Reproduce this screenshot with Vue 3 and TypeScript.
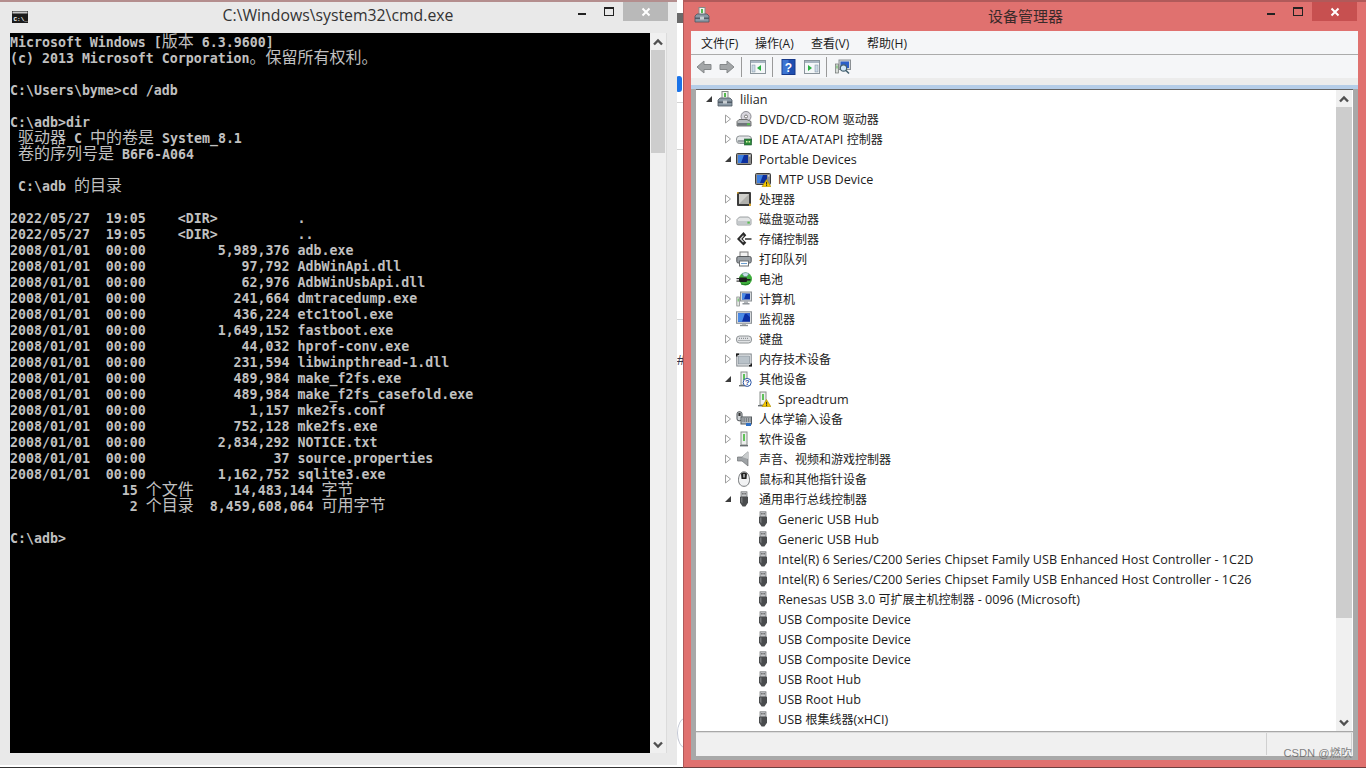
<script setup lang="ts">
interface Segment { text: string; cjk: boolean }
interface TreeRow { level: number; arrow: '' | 'open' | 'closed'; icon: string; label: string }

const consoleText: string[] = [
  'Microsoft Windows [版本 6.3.9600]',
  '(c) 2013 Microsoft Corporation。保留所有权利。',
  '',
  'C:\\Users\\byme>cd /adb',
  '',
  'C:\\adb>dir',
  ' 驱动器 C 中的卷是 System_8.1',
  ' 卷的序列号是 B6F6-A064',
  '',
  ' C:\\adb 的目录',
  '',
  '2022/05/27  19:05    <DIR>          .',
  '2022/05/27  19:05    <DIR>          ..',
  '2008/01/01  00:00         5,989,376 adb.exe',
  '2008/01/01  00:00            97,792 AdbWinApi.dll',
  '2008/01/01  00:00            62,976 AdbWinUsbApi.dll',
  '2008/01/01  00:00           241,664 dmtracedump.exe',
  '2008/01/01  00:00           436,224 etc1tool.exe',
  '2008/01/01  00:00         1,649,152 fastboot.exe',
  '2008/01/01  00:00            44,032 hprof-conv.exe',
  '2008/01/01  00:00           231,594 libwinpthread-1.dll',
  '2008/01/01  00:00           489,984 make_f2fs.exe',
  '2008/01/01  00:00           489,984 make_f2fs_casefold.exe',
  '2008/01/01  00:00             1,157 mke2fs.conf',
  '2008/01/01  00:00           752,128 mke2fs.exe',
  '2008/01/01  00:00         2,834,292 NOTICE.txt',
  '2008/01/01  00:00                37 source.properties',
  '2008/01/01  00:00         1,162,752 sqlite3.exe',
  '              15 个文件     14,483,144 字节',
  '               2 个目录  8,459,608,064 可用字节',
  '',
  'C:\\adb>',
]

function segments(line: string): Segment[] {
  const parts = line.split(/([\u3000-\u9fff]+)/).filter((p) => p.length > 0)
  return parts.map((text) => ({ text, cjk: /[\u3000-\u9fff]/.test(text) }))
}
const consoleLines = consoleText.map(segments)

const usb = (label: string): TreeRow => ({ level: 2, arrow: '', icon: 'usb', label })
const rows: TreeRow[] = [
  { level: 0, arrow: 'open', icon: 'computer', label: 'lilian' },
  { level: 1, arrow: 'closed', icon: 'dvd', label: 'DVD/CD-ROM 驱动器' },
  { level: 1, arrow: 'closed', icon: 'ide', label: 'IDE ATA/ATAPI 控制器' },
  { level: 1, arrow: 'open', icon: 'portable', label: 'Portable Devices' },
  { level: 2, arrow: '', icon: 'mtp', label: 'MTP USB Device' },
  { level: 1, arrow: 'closed', icon: 'cpu', label: '处理器' },
  { level: 1, arrow: 'closed', icon: 'disk', label: '磁盘驱动器' },
  { level: 1, arrow: 'closed', icon: 'storage', label: '存储控制器' },
  { level: 1, arrow: 'closed', icon: 'printer', label: '打印队列' },
  { level: 1, arrow: 'closed', icon: 'battery', label: '电池' },
  { level: 1, arrow: 'closed', icon: 'pc', label: '计算机' },
  { level: 1, arrow: 'closed', icon: 'monitor', label: '监视器' },
  { level: 1, arrow: 'closed', icon: 'keyboard', label: '键盘' },
  { level: 1, arrow: 'closed', icon: 'memory', label: '内存技术设备' },
  { level: 1, arrow: 'open', icon: 'other', label: '其他设备' },
  { level: 2, arrow: '', icon: 'unknown', label: 'Spreadtrum' },
  { level: 1, arrow: 'closed', icon: 'hid', label: '人体学输入设备' },
  { level: 1, arrow: 'closed', icon: 'software', label: '软件设备' },
  { level: 1, arrow: 'closed', icon: 'sound', label: '声音、视频和游戏控制器' },
  { level: 1, arrow: 'closed', icon: 'mouse', label: '鼠标和其他指针设备' },
  { level: 1, arrow: 'open', icon: 'usb', label: '通用串行总线控制器' },
  usb('Generic USB Hub'),
  usb('Generic USB Hub'),
  usb('Intel(R) 6 Series/C200 Series Chipset Family USB Enhanced Host Controller - 1C2D'),
  usb('Intel(R) 6 Series/C200 Series Chipset Family USB Enhanced Host Controller - 1C26'),
  usb('Renesas USB 3.0 可扩展主机控制器 - 0096 (Microsoft)'),
  usb('USB Composite Device'),
  usb('USB Composite Device'),
  usb('USB Composite Device'),
  usb('USB Root Hub'),
  usb('USB Root Hub'),
  usb('USB 根集线器(xHCI)'),
]

const warn = '<path d="M11.5 8.5 16 15.8H7z" fill="#f5c800" stroke="#a88600" stroke-width=".6"/><rect x="11.1" y="10.8" width="1" height="2.8" fill="#222"/><rect x="11.1" y="14.1" width="1" height="1" fill="#222"/>'
const tower = '<rect x="5" y="1" width="6" height="13" fill="#eef0ee" stroke="#8a8f8c"/><rect x="7" y="3" width="2" height="6" fill="#5fc25a"/><rect x="3" y="14" width="10" height="1.4" fill="#6a6f72"/>'
const portable = '<rect x="0.5" y="2.5" width="15" height="11" rx="1" fill="#8b8b8b" stroke="#3d3d3d"/><rect x="2" y="4" width="10" height="8" fill="#0c2f9e"/><path d="M2 4h6l-3 8H2z" fill="#3d7fe0"/><rect x="12.8" y="4" width="1.6" height="1.6" fill="#ddd"/>'
const icons: Record<string, string> = {
  computer: '<rect x="5" y="0.5" width="6" height="8" fill="#f1f3f1" stroke="#858b88"/><rect x="7" y="2" width="2" height="4" fill="#56b84f"/><path d="M1 9 3 7h10l2 2v6H1z" fill="#8a98a4" stroke="#4c5660" stroke-width=".8"/><rect x="1" y="10.6" width="14" height="1.2" fill="#46505a"/><rect x="6" y="9.6" width="4" height="3" fill="#c8ced2"/>',
  dvd: '<circle cx="10" cy="5.5" r="5" fill="#d7d5dc" stroke="#8b8b92"/><circle cx="10" cy="5.5" r="1.5" fill="#fff" stroke="#777"/><path d="M1 10.5 3 8.5h8l4 2v4.5H1z" fill="#b8bcbf" stroke="#555" stroke-width=".8"/><rect x="1.4" y="12" width="13" height="2.7" fill="#6e7478"/><rect x="11" y="12.4" width="3" height="1.8" fill="#54c04a"/>',
  ide: '<rect x="0.5" y="5" width="15" height="7.5" rx="3" fill="#e4e7e8" stroke="#8d9295"/><rect x="1.5" y="9" width="13" height="2.5" rx="1" fill="#9aa0a4"/><rect x="8.5" y="8" width="7" height="6" fill="#2e8a3a" stroke="#15562a" stroke-width=".6"/><rect x="10" y="10" width="1.5" height="1.5" fill="#d9f2a6"/><rect x="12.6" y="10" width="1.5" height="1.5" fill="#d9f2a6"/>',
  portable,
  mtp: portable + warn,
  cpu: '<rect x="1" y="1" width="14" height="14" rx="1" fill="#3c3c3c"/><rect x="3" y="3" width="10" height="10" fill="#b0b0ac"/><path d="M3 3h10L3 13z" fill="#d0d0cc"/><rect x="13" y="12.6" width="2" height="2.4" fill="#d8a530"/><rect x="1" y="1" width="1.6" height="1.6" fill="#d8a530"/>',
  disk: '<path d="M1 8.5 3.5 6h9L15 8.5V13a1 1 0 0 1-1 1H2a1 1 0 0 1-1-1z" fill="#e2e4e5" stroke="#858a8d" stroke-width=".8"/><rect x="1.5" y="10" width="13" height="3.4" fill="#c4c8cb"/><rect x="11.4" y="10.6" width="2.4" height="2" fill="#58bd50"/>',
  storage: '<path d="M7.5 1 1 8l6.500 6.500 2.800-2.800-3.600-3.700 3.600-3.700z" fill="#2a2a2a"/><path d="M7.500 4.600 4.400 8l3.100 3" fill="none" stroke="#d8d8d8" stroke-width="1.200"/><rect x="9" y="7" width="6.500" height="2" fill="#666"/>',
  printer: '<rect x="4" y="1" width="8" height="5" fill="#f2f2f2" stroke="#7c7c7c"/><rect x="0.800" y="5.500" width="14.400" height="6.500" rx="1.500" fill="#9aa0a5" stroke="#55595c"/><rect x="3.500" y="10" width="9" height="5" fill="#fff" stroke="#6b6f72"/><rect x="5" y="12" width="6" height="1" fill="#6b9ecf"/>',
  battery: '<circle cx="9.500" cy="8" r="6.500" fill="#3fae3c"/><path d="M6 2.500a6 4 0 0 1 7 0l-2 3H8z" fill="#c9dfe8" stroke="#5b7f8f" stroke-width=".5"/><path d="M5 13a6 3 0 0 0 9-1" stroke="#1e7a24" fill="none"/><rect x="3" y="6.500" width="8" height="4.500" rx="1" fill="#1d1d1d"/><rect x="0.500" y="7" width="3" height="1.200" fill="#333"/><rect x="0.500" y="9.500" width="3" height="1.200" fill="#333"/><rect x="10.500" y="8" width="4" height="1.600" fill="#222"/>',
  pc: '<rect x="4.500" y="1" width="11" height="9" fill="#d6dadd" stroke="#8b9094"/><rect x="6" y="2.500" width="8" height="6" fill="#0c33a8"/><path d="M6 2.500h4l-2 6H6z" fill="#4b8ae5"/><rect x="8" y="10" width="4" height="2" fill="#b2b6b9"/><rect x="6.500" y="12" width="7" height="1.500" fill="#90959a"/><rect x="0.800" y="6" width="2.800" height="9" fill="#e6e8e6" stroke="#7d8380" stroke-width=".7"/><rect x="1.700" y="7.500" width="1" height="3" fill="#5bbd54"/>',
  monitor: '<rect x="0.500" y="0.800" width="15" height="11.500" fill="#d9dcdf" stroke="#8c9195"/><rect x="2" y="2.300" width="12" height="8.500" fill="#0b2fa4"/><path d="M2 2.300h7l-3 8.500H2z" fill="#4a8ae6"/><path d="M10 2.300h4v4z" fill="#2c5fd0"/><rect x="6" y="12.300" width="4" height="1.500" fill="#a8acb0"/><rect x="4" y="13.800" width="8" height="1.400" fill="#8b9094"/>',
  keyboard: '<rect x="0.500" y="5" width="15" height="7" rx="3" fill="#e0e2e4" stroke="#8f9496"/><path d="M3 7.300h10M2.500 9.500h11" stroke="#777c80" stroke-width="1" stroke-dasharray="1 1"/>',
  memory: '<rect x="0.800" y="3" width="14.400" height="12" fill="#eef0f2" stroke="#7e8488"/><rect x="2.400" y="5" width="11.200" height="8" fill="#b9c2c9" stroke="#7f8a92" stroke-width=".6"/><path d="M0 2.600h3v1.500H1.500v1.500H0zM16 15.500h-3V14h1.500v-1.500H16z" fill="#1c1c1c"/>',
  other: tower + '<circle cx="11.200" cy="11.400" r="4" fill="#fff" stroke="#2b55a5"/><text x="11.200" y="14.200" font-size="7.500" font-weight="700" text-anchor="middle" fill="#1a3f94" font-family="Liberation Sans, sans-serif">?</text>',
  unknown: tower + warn,
  hid: '<rect x="1" y="0.800" width="5" height="9" rx="2" fill="#cfd3d6" stroke="#4d5256"/><rect x="2.400" y="2" width="2.200" height="3" fill="#333"/><rect x="5" y="6" width="10.500" height="7" fill="#b9bec2" stroke="#555a5e"/><path d="M6.500 8h8M6.500 10h8" stroke="#2c3236" stroke-dasharray="1 .8"/><rect x="10" y="12" width="5" height="3" fill="#2e6fc4"/>',
  software: '<rect x="5" y="1" width="6" height="13" fill="#eceeec" stroke="#878c89"/><rect x="7" y="3" width="2" height="7" fill="#61c25a"/><rect x="4" y="14" width="8" height="1.400" fill="#6a6f72"/>',
  sound: '<path d="M1.500 6H6l6-5.200V15L6 10H1.500z" fill="#9ea2a5" stroke="#6d7174" stroke-width=".7"/><path d="M6 6l6-5.200V8z" fill="#c9cccd"/>',
  mouse: '<path d="M8 .8c3.500 0 5.200 3.500 5.500 7.500.2 3.500-1.500 7-5.500 7s-5.700-3.500-5.500-7C2.800 4.300 4.500.8 8 .8z" fill="#f1f2f3" stroke="#55595c" stroke-width=".8"/><path d="M5 2.500c1.600-1.300 4.400-1.300 6 0l-.5 5.500h-5z" fill="#222"/><rect x="7.200" y="3" width="1.600" height="3.500" fill="#b5b8ba"/>',
  usb: '<rect x="5" y="0.800" width="6" height="5" fill="#c4c6c8" stroke="#6c6e70" stroke-width=".7"/><rect x="6.300" y="2" width="1.200" height="1.500" fill="#555"/><rect x="8.500" y="2" width="1.200" height="1.500" fill="#555"/><path d="M4 5.800h8v6l-2.600 3.800H6.600L4 11.800z" fill="#4a4c4e"/><path d="M5 6.500h1.500v6L5 11z" fill="#77797b"/>',
}
</script>

<template>
  <div class="desktop">
    <section class="cmd">
      <header class="cmd-title">
        <svg class="cmd-icon" viewBox="0 0 16 12" width="16" height="12">
          <rect width="16" height="12" fill="#1c1c1c" />
          <rect x="0.500" y="0.500" width="15" height="2" fill="#c8c8c8" />
          <text x="1.500" y="9.500" font-size="6" font-weight="700" fill="#fff" font-family="Liberation Mono, monospace">C:\_</text>
        </svg>
        <span class="cmd-caption">C:\Windows\system32\cmd.exe</span>
        <div class="caption-btns">
          <span class="btn-min"></span>
          <span class="btn-max"></span>
          <span class="btn-close gray">
            <svg viewBox="0 0 10 10" width="10" height="10"><path d="M1.500 1.500l7 7M8.500 1.500l-7 7" stroke="#fff" stroke-width="2" /></svg>
          </span>
        </div>
      </header>
      <div class="cmd-body">
        <div class="console">
          <div v-for="(line, i) in consoleLines" :key="i" class="cline"><span v-for="(seg, j) in line" :key="j" :class="{ cjk: seg.cjk }">{{ seg.text }}</span></div>
        </div>
        <div class="scroll cmd-scroll">
          <svg class="chev" viewBox="0 0 12 8" width="12" height="8"><path d="M2 6.500l4-4 4 4" fill="none" stroke="#505050" stroke-width="2.400" /></svg>
          <div class="thumb cmd-thumb"></div>
          <div class="track"></div>
          <svg class="chev" viewBox="0 0 12 8" width="12" height="8"><path d="M2 1.500l4 4 4-4" fill="none" stroke="#505050" stroke-width="2.400" /></svg>
        </div>
      </div>
    </section>

    <div class="behind">
      <span class="behind-dark"></span>
      <span class="behind-badge"></span>
      <span class="behind-line l1"></span>
      <span class="behind-line l2"></span>
      <span class="behind-line l3"></span>
      <span class="behind-hash">#</span>
      <span class="behind-arc"></span>
    </div>

    <section class="devmgr">
      <header class="dm-title">
        <svg class="dm-icon" viewBox="0 0 16 16" width="16" height="16" v-html="icons.computer"></svg>
        <span class="dm-caption">设备管理器</span>
        <div class="caption-btns">
          <span class="btn-min"></span>
          <span class="btn-max"></span>
          <span class="btn-close red">
            <svg viewBox="0 0 10 10" width="10" height="10"><path d="M1.500 1.500l7 7M8.500 1.500l-7 7" stroke="#fff" stroke-width="2" /></svg>
          </span>
        </div>
      </header>
      <div class="dm-client">
        <nav class="menubar">
          <span>文件(F)</span><span>操作(A)</span><span>查看(V)</span><span>帮助(H)</span>
        </nav>
        <div class="toolbar">
          <svg class="tb first" viewBox="0 0 16 16" width="16" height="16"><path d="M1 8l7-6v3.500h7v5H8V14z" fill="#a3a6a8" stroke="#85888a" /></svg>
          <svg class="tb" viewBox="0 0 16 16" width="16" height="16"><path d="M15 8 8 2v3.500H1v5h7V14z" fill="#a3a6a8" stroke="#85888a" /></svg>
          <i class="tb-sep"></i>
          <svg class="tb" viewBox="0 0 16 16" width="16" height="16"><rect x="0.500" y="1.500" width="15" height="13" fill="#f4f7f9" stroke="#8a949c" /><rect x="1" y="2" width="14" height="2" fill="#a9b6c2" /><rect x="2" y="6" width="3" height="7" fill="#cbd9e6" stroke="#7d8f9f" stroke-width=".5" /><path d="M11 6v6L7 9z" fill="#28b040" /></svg>
          <i class="tb-sep"></i>
          <svg class="tb" viewBox="0 0 16 16" width="16" height="16"><rect x="1" y="0.500" width="13" height="15" fill="#1f4fb0" stroke="#16388a" /><rect x="1.500" y="1" width="6" height="14" fill="#3c74d2" /><text x="7.500" y="12.800" font-size="12" font-weight="700" text-anchor="middle" fill="#fff" font-family="Liberation Sans, sans-serif">?</text></svg>
          <svg class="tb" viewBox="0 0 16 16" width="16" height="16"><rect x="0.500" y="1.500" width="15" height="13" fill="#f4f7f9" stroke="#8a949c" /><rect x="1" y="2" width="14" height="2" fill="#a9b6c2" /><rect x="11" y="6" width="3" height="7" fill="#cbd9e6" stroke="#7d8f9f" stroke-width=".5" /><path d="M4 6v6l4-3z" fill="#28b040" /></svg>
          <i class="tb-sep"></i>
          <svg class="tb" viewBox="0 0 16 16" width="16" height="16"><rect x="4" y="1" width="11.500" height="9.500" fill="#d4d8db" stroke="#8b9094" /><rect x="5.500" y="2.500" width="8.500" height="6.500" fill="#2a5fc8" /><rect x="0.500" y="5" width="3" height="9" fill="#d8dcd9" stroke="#6d7370" stroke-width=".7" /><rect x="1.500" y="6.500" width="1" height="3" fill="#55b54e" /><circle cx="8.500" cy="9" r="3.200" fill="#cfe6f7" stroke="#44606f" stroke-width="1.200" /><path d="M11 11.500l3 3" stroke="#44606f" stroke-width="1.600" /></svg>
        </div>
        <div class="strip"></div>
        <div class="dm-frame">
          <div class="dm-pane">
            <div class="tree">
              <div v-for="(row, i) in rows" :key="i" class="row" :class="'lvl' + row.level">
                <span class="arrow">
                  <svg v-if="row.arrow === 'closed'" viewBox="0 0 8 10" width="8" height="10"><path d="M1.500 1 6.500 5 1.500 9z" fill="#fff" stroke="#a0a0a0" /></svg>
                  <svg v-else-if="row.arrow === 'open'" viewBox="0 0 8 8" width="8" height="8"><path d="M7 1v6H1z" fill="#3c3c3c" /></svg>
                </span>
                <svg class="ricon" viewBox="0 0 16 16" width="16" height="16" v-html="icons[row.icon]"></svg>
                <span class="label"><span v-for="(seg, j) in segments(row.label)" :key="j" :class="{ zh: seg.cjk }">{{ seg.text }}</span></span>
              </div>
            </div>
            <div class="scroll tree-scroll">
              <svg class="chev" viewBox="0 0 12 8" width="12" height="8"><path d="M2 6.500l4-4 4 4" fill="none" stroke="#505050" stroke-width="2.400" /></svg>
              <div class="thumb tree-thumb"></div>
              <div class="track"></div>
              <svg class="chev" viewBox="0 0 12 8" width="12" height="8"><path d="M2 1.500l4 4 4-4" fill="none" stroke="#505050" stroke-width="2.400" /></svg>
            </div>
          </div>
          <footer class="status"><i></i><i></i></footer>
        </div>
      </div>
      <div class="watermark">CSDN @燃吹</div>
    </section>
  </div>
</template>

<style>
html, body { margin: 0; padding: 0; background: #fff; }
</style>

<style scoped>
.desktop { position: relative; width: 1366px; height: 768px; overflow: hidden; background: #fff; font-family: "Open Sans", "Noto Sans CJK SC", sans-serif; }

/* cmd window */
.cmd { position: absolute; left: 0; top: 0; width: 677px; height: 765px; box-sizing: border-box; border-top: 2px solid #b48e8e; background: #e9e9e9; display: flex; flex-direction: column; }
.cmd::after { content: ""; position: absolute; left: 0; right: -6px; top: 765px; height: 1px; background: #333; }
.cmd-title { position: relative; height: 31px; display: flex; align-items: flex-start; }
.cmd-icon { margin: 9px 0 0 12px; }
.cmd-caption { position: absolute; left: 0; width: 676px; top: 3px; text-align: center; font-size: 15.8px; line-height: 20px; color: #333; }
.caption-btns { position: absolute; top: 0; right: 9px; display: flex; height: 19px; align-items: stretch; }
.btn-min { width: 27px; position: relative; }
.btn-min::after { content: ""; position: absolute; left: 9px; top: 11px; width: 8px; height: 2px; background: #222; }
.btn-max { width: 27px; position: relative; }
.btn-max::after { content: ""; position: absolute; left: 8px; top: 5px; width: 8px; height: 6px; border: 1px solid #222; border-top-width: 2px; }
.btn-close { width: 45px; display: flex; align-items: center; justify-content: center; }
.btn-close.gray { background: #b9b9b9; }
.btn-close.red { background: #c75050; }
.cmd-body { display: flex; padding-left: 10px; }
.console { width: 640px; height: 720px; box-sizing: border-box; padding-top: 2px; background: #000; color: #c0c0c0; font: 700 13.28px/16px "DejaVu Sans Mono", monospace; overflow: hidden; }
.cline { height: 16px; white-space: pre; }
.cjk { font: 400 16px/1px "Noto Sans CJK SC", sans-serif; }

.scroll { display: flex; flex-direction: column; align-items: center; background: #f0f0f0; box-sizing: border-box; }
.chev { flex: none; margin: 5px 0 4px; }
.thumb { background: #cdcdcd; align-self: stretch; flex: none; }
.track { flex: 1; }
.cmd-scroll { width: 17px; height: 720px; border-right: 1px solid #dcdcdc; }
.cmd-thumb { height: 103px; margin-right: 1px; margin-left: 1px; }

/* what shows between the two windows */
.behind { position: absolute; left: 677px; top: 2px; width: 6px; height: 764px; background: #fff; overflow: hidden; }
.behind > span { position: absolute; display: block; }
.behind-dark { left: 0; top: 11px; width: 6px; height: 10px; background: #6a6a6a; }
.behind-badge { left: -1px; top: 74px; width: 6px; height: 16px; border-radius: 3px; background: #1a73e8; }
.behind-line { left: 0; width: 6px; height: 1px; background: #d4d4d4; }
.behind-line.l1 { top: 100px; }
.behind-line.l2 { top: 147px; }
.behind-line.l3 { top: 317px; }
.behind-hash { left: 0; top: 350px; font: 14px/16px "Liberation Sans", sans-serif; color: #33334a; }
.behind-arc { left: 0; top: 716px; width: 14px; height: 28px; border-radius: 50%; border: 1px solid #c4c8d4; }

/* device manager */
.devmgr { position: absolute; left: 683px; top: 0; width: 683px; height: 768px; box-sizing: border-box; background: #e0716f; border-top: 2px solid #b05a5a; border-left: 1px solid #b05a5a; border-bottom: 1px solid #6f3f3f; display: flex; flex-direction: column; padding: 0 8px 7px 7px; }
.dm-title { position: relative; height: 29px; margin: 0 -8px 0 -7px; flex: none; }
.dm-icon { position: absolute; left: 10px; top: 5px; }
.dm-caption { position: absolute; left: 0; width: 683px; top: 4px; text-align: center; font-size: 15px; line-height: 20px; color: #3a2a2a; }
.dm-client { flex: 1; display: flex; flex-direction: column; background: #f5f6f8; min-height: 0; }
.menubar { height: 23px; flex: none; display: flex; padding-left: 2px; align-items: center; font-size: 12px; color: #1c1c1c; border-bottom: 1px solid #ababab; }
.menubar span { padding: 0 8px; width: 40px; }
.menubar span:first-child { width: 38px; }
.toolbar { height: 23px; flex: none; display: flex; align-items: center; padding-left: 5px; }
.tb { flex: none; margin-right: 7px; }
.tb-sep { flex: none; width: 1px; height: 20px; background: #9a9a9a; margin: 0 8px 0 -1px; }
.strip { height: 7px; flex: none; background: #ececec; }
.dm-frame { flex: 1; min-height: 0; background: #a8a8a8; border-top: 4px solid #b5cde8; padding: 0 5px 4px; display: flex; flex-direction: column; }
.dm-pane { flex: 1; min-height: 0; display: flex; background: #fff; border-top: 1px solid #666; padding-right: 1px; }
.tree { flex: 1; margin-top: -1px; overflow: hidden; font-size: 12.6px; color: #1c1c1c; }
.zh { font-size: 12px; }
.row { height: 20px; display: flex; align-items: center; white-space: nowrap; }
.lvl0 { padding-left: 5px; }
.lvl1 { padding-left: 24px; }
.lvl2 { padding-left: 43px; }
.arrow { flex: none; width: 16px; height: 16px; display: flex; align-items: center; justify-content: center; }
.ricon { flex: none; }
.label { margin-left: 7px; }
.tree-scroll { width: 16px; }
.tree-thumb { height: 511px; }
.status { flex: none; height: 23px; margin-top: 1px; background: #f0f0f0; border-top: 1px solid #dcdcdc; display: flex; justify-content: flex-end; }
.status i { width: 1px; height: 22px; background: #d0d0d0; margin-right: 84px; }
.status i:last-child { margin-right: 1px; }
.watermark { position: absolute; right: 14px; top: 743px; font: 11.2px/16px "Liberation Sans", "Noto Sans CJK SC", sans-serif; color: rgba(90, 90, 90, .75); }
</style>
